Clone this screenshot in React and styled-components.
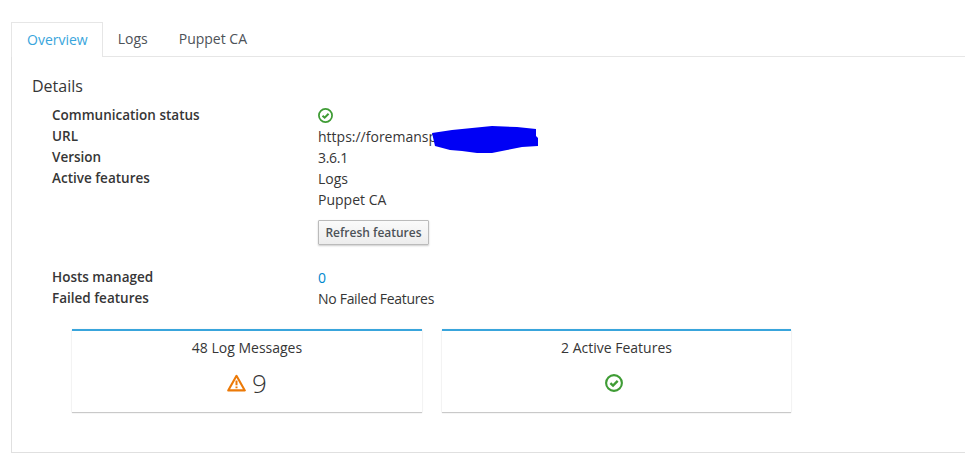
import React from "react";
import styled, { createGlobalStyle } from "styled-components";

const GlobalStyle = createGlobalStyle`
  html, body {
    margin: 0;
    background: #fff;
    overflow: hidden;
  }
  body {
    font-family: "Open Sans", "Liberation Sans", sans-serif;
    font-size: 14px;
    color: #363636;
  }
`;

const CheckIcon = ({ size }) => (
  <svg width={size} height={size} viewBox="0 0 18 18" fill="none">
    <circle cx="9" cy="9" r="7.9" stroke="#3f9c35" strokeWidth="2.1" />
    <path d="M5.4 9.2 L8 11.6 L12.7 6.9" stroke="#3f9c35" strokeWidth="2.4" />
  </svg>
);

const WarnIcon = () => (
  <svg width="19" height="18" viewBox="0 0 19 18" fill="none">
    <path d="M9.5 1.8 L17.8 16.4 H1.2 Z" stroke="#ec7a08" strokeWidth="2.1" strokeLinejoin="round" />
    <path d="M9.5 6.4 V11.2 M9.5 12.4 V14.2" stroke="#ec7a08" strokeWidth="2" />
  </svg>
);

const Scribble = () => (
  <svg width="106" height="28" viewBox="0 0 106 28">
    <path
      d="M0 7 L20 4 L40 2 L60 0 L85 1 L104 3 L104 10 L106 12 L106 20 L90 21 L75 24 L60 27 L45 27 L30 25 L18 24 L3 20 Z"
      fill="#0000f5"
    />
  </svg>
);

const Page = styled.div`
  padding: 22px 0 0 11px;
  width: 1000px;
  box-sizing: border-box;
`;

const TabBar = styled.div`
  display: flex;
  height: 34px;
  border-bottom: 1px solid #e6e6e6;
`;

const Tab = styled.div`
  height: 34px;
  line-height: 34px;
  padding: ${(p) => (p.$active ? "0 14px 0 15px" : "0 16px 0 15px")};
  box-sizing: border-box;
  color: ${(p) => (p.$active ? "#39a5dc" : "#4d5258")};
  font-size: 14px;
  ${(p) =>
    p.$active &&
    `
    background: #fff;
    border: 1px solid #e6e6e6;
    border-bottom: none;
    height: 35px;
  `}
`;

const Pane = styled.div`
  border-left: 1px solid #e0e0e0;
  border-bottom: 1px solid #e0e0e0;
  height: 396px;
  box-sizing: border-box;
  padding: 18px 0 0 20px;
`;

const Title = styled.h2`
  margin: 0 0 8px;
  font-size: 16px;
  font-weight: 400;
  line-height: 22px;
  color: #363636;
`;

const Details = styled.dl`
  display: grid;
  grid-template-columns: 266px 1fr;
  grid-auto-rows: minmax(21px, auto);
  margin: 0 0 0 20px;
  line-height: 21px;
`;

const Label = styled.dt`
  font-size: 13.5px;
  font-weight: 600;
  color: #363636;
`;

const Value = styled.dd`
  margin: 0;
  color: #363636;
  letter-spacing: ${(p) => (p.$tight ? "-0.3px" : "0")};
  position: relative;
  display: flex;
  flex-direction: column;
  align-items: flex-start;
`;

const StatusIcon = styled.span`
  display: flex;
  height: 21px;
  align-items: center;
`;

const Redaction = styled.span`
  position: absolute;
  left: 114px;
  top: 0;
  line-height: 0;
`;

const LinkValue = styled.a`
  color: #0088ce;
`;

const RefreshButton = styled.button`
  margin: 10px 0 22px;
  width: 111px;
  height: 25px;
  padding: 0;
  font-family: inherit;
  font-size: 12px;
  font-weight: 600;
  color: #4d5258;
  background: linear-gradient(#fafafa, #ededed);
  border: 1px solid #bbb;
  border-radius: 1px;
  box-shadow: 0 1px 2px rgba(0, 0, 0, 0.2);
`;

const Cards = styled.div`
  display: flex;
  gap: 20px;
  margin: 20px 0 0 40px;
`;

const Card = styled.section`
  width: ${(p) => p.$width}px;
  height: 83px;
  box-sizing: border-box;
  border-top: 2px solid #39a5dc;
  box-shadow: 0 1px 1px rgba(3, 3, 3, 0.2), 0 0 2px rgba(3, 3, 3, 0.06);
  display: flex;
  flex-direction: column;
  align-items: center;
  padding-top: 6px;
`;

const CardTitle = styled.div`
  line-height: 21px;
  font-size: 14px;
  color: #363636;
`;

const CardBody = styled.div`
  display: flex;
  align-items: center;
  justify-content: center;
  gap: 6px;
  height: 36px;
  margin-top: 7px;
  font-size: 26px;
  font-weight: 300;
  color: #363636;
`;

export default function App() {
  return (
    <Page>
      <GlobalStyle />
      <TabBar>
        <Tab $active>Overview</Tab>
        <Tab>Logs</Tab>
        <Tab>Puppet CA</Tab>
      </TabBar>
      <Pane>
        <Title>Details</Title>
        <Details>
          <Label>Communication status</Label>
          <Value>
            <StatusIcon>
              <CheckIcon size={15} />
            </StatusIcon>
          </Value>
          <Label>URL</Label>
          <Value>
            https://foremansp
            <Redaction>
              <Scribble />
            </Redaction>
          </Value>
          <Label>Version</Label>
          <Value $tight>3.6.1</Value>
          <Label>Active features</Label>
          <Value>
            <span>Logs</span>
            <span>Puppet CA</span>
            <RefreshButton>Refresh features</RefreshButton>
          </Value>
          <Label>Hosts managed</Label>
          <Value>
            <LinkValue>0</LinkValue>
          </Value>
          <Label>Failed features</Label>
          <Value $tight>No Failed Features</Value>
        </Details>
        <Cards>
          <Card $width={350}>
            <CardTitle>48 Log Messages</CardTitle>
            <CardBody>
              <WarnIcon />
              9
            </CardBody>
          </Card>
          <Card $width={349}>
            <CardTitle>2 Active Features</CardTitle>
            <CardBody>
              <CheckIcon size={18} />
              <span />
            </CardBody>
          </Card>
        </Cards>
      </Pane>
    </Page>
  );
}
